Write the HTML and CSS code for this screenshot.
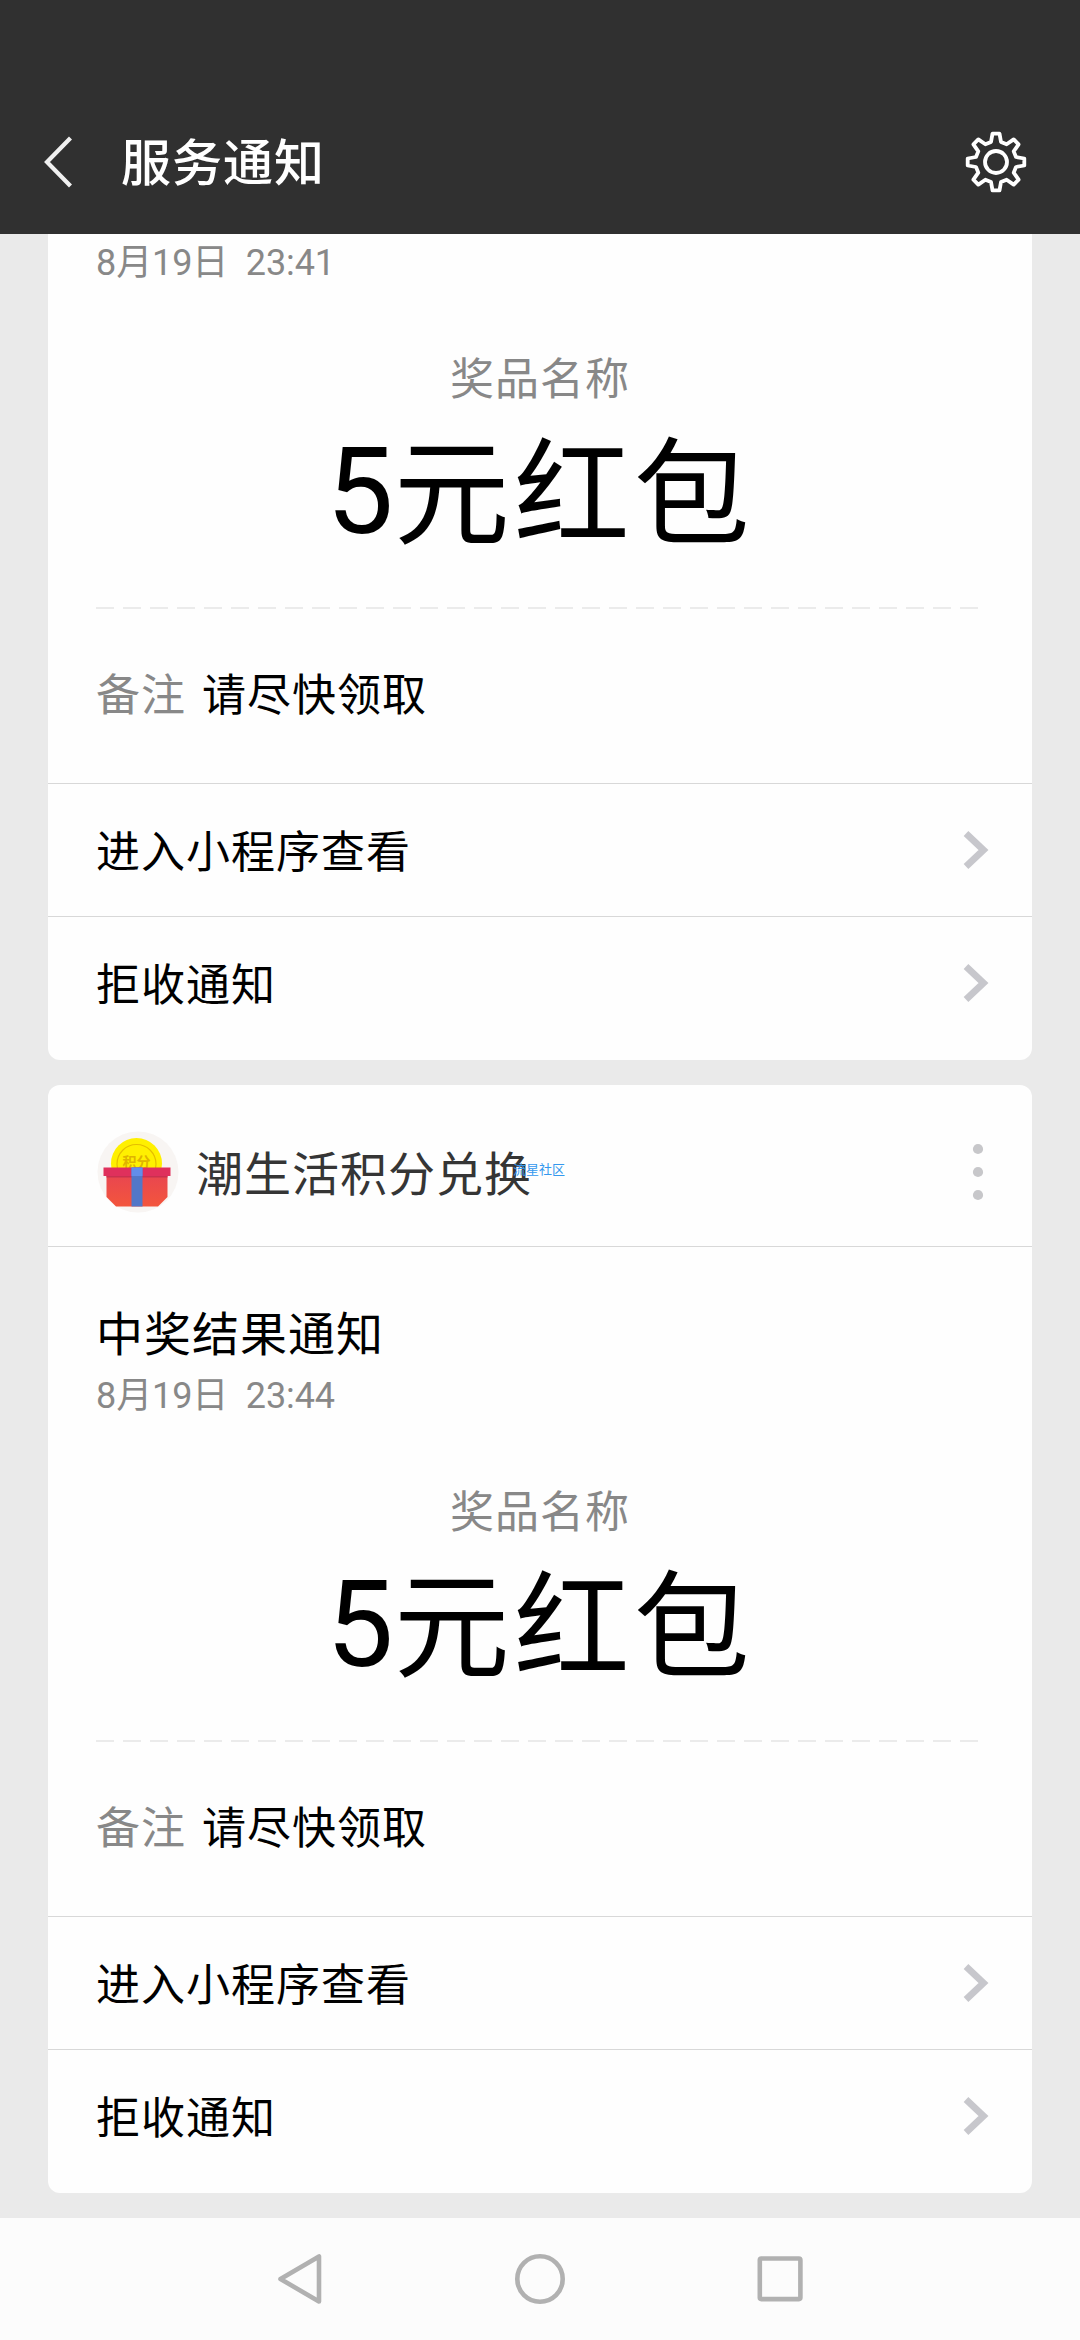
FILE: index.html
```html
<!DOCTYPE html>
<html lang="zh-CN">
<head>
<meta charset="utf-8">
<title>服务通知</title>
<link rel="stylesheet" href="styles.css">
</head>
<body>
<svg class="defs" width="0" height="0" aria-hidden="true">
  <symbol id="chevron" viewBox="0 0 26 40"><path d="M3 3.5 20.5 20 3 36.5" fill="none" stroke="#c7c7cc" stroke-width="6.8"/></symbol>
</svg>
<header class="topbar">
  <svg class="back" width="32" height="56" viewBox="0 0 32 56"><path d="M28.5 4 5 28 28.5 52" fill="none" stroke="#f0f0f0" stroke-width="4.2"/></svg>
  <h1 class="topbar-title">服务通知</h1>
  <svg class="gear" width="64" height="64" viewBox="-32 -32 64 64" fill="none" stroke="#fff" stroke-width="3.8" stroke-linejoin="round">
    <path d="M-3.5 -28.3H3.5L5 -20 10.6 -17.7 17.7 -22.6 22.6 -17.7 17.7 -10.6 20 -5 28.3 -3.5V3.5L20 5 17.7 10.6 22.6 17.7 17.7 22.6 10.6 17.7 5 20 3.5 28.3H-3.5L-5 20 -10.6 17.7 -17.7 22.6 -22.6 17.7 -17.7 10.6 -20 5 -28.3 3.5V-3.5L-20 -5 -17.7 -10.6 -22.6 -17.7 -17.7 -22.6 -10.6 -17.7 -5 -20Z"/>
    <circle r="11"/>
  </svg>
</header>
<main class="feed">
  <article class="card card-scrolled">
    <div class="card-body">
      <p class="date">8月19日  23:41</p>
      <p class="prize-label">奖品名称</p>
      <p class="prize">5<span class="prize-unit">元红包</span></p>
      <div class="dashes"></div>
      <p class="remark"><span class="remark-label">备注</span><span>请尽快领取</span></p>
    </div>
    <div class="action"><span>进入小程序查看</span><svg class="chevron"><use href="#chevron"/></svg></div>
    <div class="action"><span>拒收通知</span><svg class="chevron"><use href="#chevron"/></svg></div>
  </article>
  <article class="card">
    <div class="card-head">
      <svg class="logo" width="84" height="84" viewBox="0 0 84 84">
        <defs>
          <linearGradient id="box" x1="0" y1="0" x2="0" y2="1"><stop offset="0" stop-color="#e94650"/><stop offset="1" stop-color="#f3553c"/></linearGradient>
        </defs>
        <circle cx="42" cy="42" r="40.5" fill="#f8f5f3"/>
        <circle cx="40.5" cy="33.5" r="25.5" fill="#fff000"/>
        <circle cx="40.5" cy="34" r="19.5" fill="none" stroke="#e5bd00" stroke-width="1.2"/>
        <text class="coin-text" x="40.5" y="36.5" text-anchor="middle">积分</text>
        <path d="M10.500 45H71.500V67L62 76.500H20L10.500 67Z" fill="url(#box)"/>
        <path d="M7.500 37.500H74.500V46H7.500Z" fill="#df305c"/>
        <path d="M10.500 46H71.500V47.500H10.500Z" fill="#c9304f"/>
        <path d="M35.500 37.500H46.500V76.500H35.500Z" fill="#5277c8"/>
        <path d="M35.500 37.500H46.500V46H35.500Z" fill="#628dea"/>
      </svg>
      <h2 class="name">潮生活积分兑换<span class="watermark">流星社区</span></h2>
      <svg class="more" width="12" height="58" viewBox="0 0 12 58" fill="#c7c7ca"><circle cx="6" cy="6" r="5.100"/><circle cx="6" cy="29" r="5.100"/><circle cx="6" cy="52" r="5.100"/></svg>
    </div>
    <div class="card-body">
      <h3 class="title">中奖结果通知</h3>
      <p class="date">8月19日  23:44</p>
      <p class="prize-label">奖品名称</p>
      <p class="prize">5<span class="prize-unit">元红包</span></p>
      <div class="dashes"></div>
      <p class="remark"><span class="remark-label">备注</span><span>请尽快领取</span></p>
    </div>
    <div class="action"><span>进入小程序查看</span><svg class="chevron"><use href="#chevron"/></svg></div>
    <div class="action"><span>拒收通知</span><svg class="chevron"><use href="#chevron"/></svg></div>
  </article>
</main>
<nav class="navbar">
  <svg width="52" height="60" viewBox="0 0 52 60"><path d="M41 7.500V52.500L2.500 30Z"/></svg>
  <svg width="60" height="60" viewBox="0 0 60 60"><circle cx="30" cy="30" r="22.700"/></svg>
  <svg width="60" height="60" viewBox="0 0 60 60"><rect x="9.800" y="9.500" width="40.600" height="40.600" rx="1.500"/></svg>
</nav>
</body>
</html>
```
FILE: styles.css
```css
* { box-sizing: border-box; margin: 0; padding: 0; }

body {
  width: 1080px;
  height: 2340px;
  display: flex;
  flex-direction: column;
  background: #eaeaea;
  color: #000;
  font-family: Roboto, "Noto Sans CJK SC", sans-serif;
  font-weight: 400;
}

h1, h2, h3 { font-weight: 400; }
svg { display: block; flex: none; }
.defs { display: none; }

.topbar {
  height: 234px;
  flex: none;
  display: flex;
  align-items: center;
  padding: 90px 52px 0 42px;
  background: #303030;
  color: #fff;
}
.topbar-title {
  flex: 1;
  margin-left: 47px;
  padding-top: 3px;
  font-size: 50px;
  font-weight: 500;
  letter-spacing: 1px;
  line-height: 60px;
}

.feed {
  flex: 1;
  display: flex;
  flex-direction: column;
  gap: 25px;
  padding: 0 48px;
}
.card {
  padding-bottom: 11px;
  background: #fefefe;
  border-radius: 12px;
}
.card-scrolled { border-radius: 0 0 12px 12px; }

.card-head {
  height: 162px;
  display: flex;
  align-items: center;
  padding: 12px 48px 0;
  border-bottom: 1px solid #d8d8d8;
}
.name {
  position: relative;
  margin: 6px auto 0 16px;
  color: #353535;
  font-size: 47px;
  letter-spacing: 1px;
  line-height: 60px;
}
.watermark {
  position: absolute;
  left: 317px;
  top: 17px;
  color: #3498ee;
  font-size: 13px;
  letter-spacing: 0;
  line-height: 16px;
  white-space: nowrap;
}
.coin-text { font-size: 14px; fill: #dfb400; font-weight: 700; }

.card-body { padding: 58px 48px 60px; }
.card-scrolled .card-body { padding-top: 8px; }
.title { font-size: 47px; letter-spacing: 1px; line-height: 60px; margin-bottom: 10px; }
.date { color: #888; font-size: 36px; letter-spacing: -0.1px; line-height: 42px; white-space: pre; }
.prize-label {
  margin-top: 69px;
  color: #888;
  font-size: 44px;
  letter-spacing: 1px;
  line-height: 54px;
  text-align: center;
}
.prize {
  height: 140px;
  margin-top: 15px;
  font-size: 120px;
  line-height: 140px;
  text-align: center;
}
.prize-unit {
  font-size: 116px;
  letter-spacing: 4px;
  line-height: 1;
  vertical-align: -2px;
}
.dashes {
  height: 2px;
  margin: 45px 0 60px;
  background: repeating-linear-gradient(90deg, #ebebeb 0 18px, transparent 18px 27px);
}
.remark {
  display: flex;
  gap: 16px;
  font-size: 44px;
  letter-spacing: 1px;
  line-height: 54px;
}
.remark-label { color: #888; }

.action {
  height: 133px;
  display: flex;
  align-items: center;
  justify-content: space-between;
  padding: 0 43px 0 48px;
  border-top: 1px solid #d8d8d8;
  font-size: 44px;
  letter-spacing: 1px;
  line-height: 54px;
}
.action span { padding-top: 6px; }
.chevron { width: 26px; height: 40px; }

.navbar {
  height: 122px;
  flex: none;
  display: flex;
  align-items: center;
  justify-content: center;
  gap: 180px;
  padding-left: 8px;
  background: #fcfcfc;
}
.navbar svg { fill: none; stroke: #b1b1b1; stroke-width: 4.6; stroke-linejoin: round; }
```
